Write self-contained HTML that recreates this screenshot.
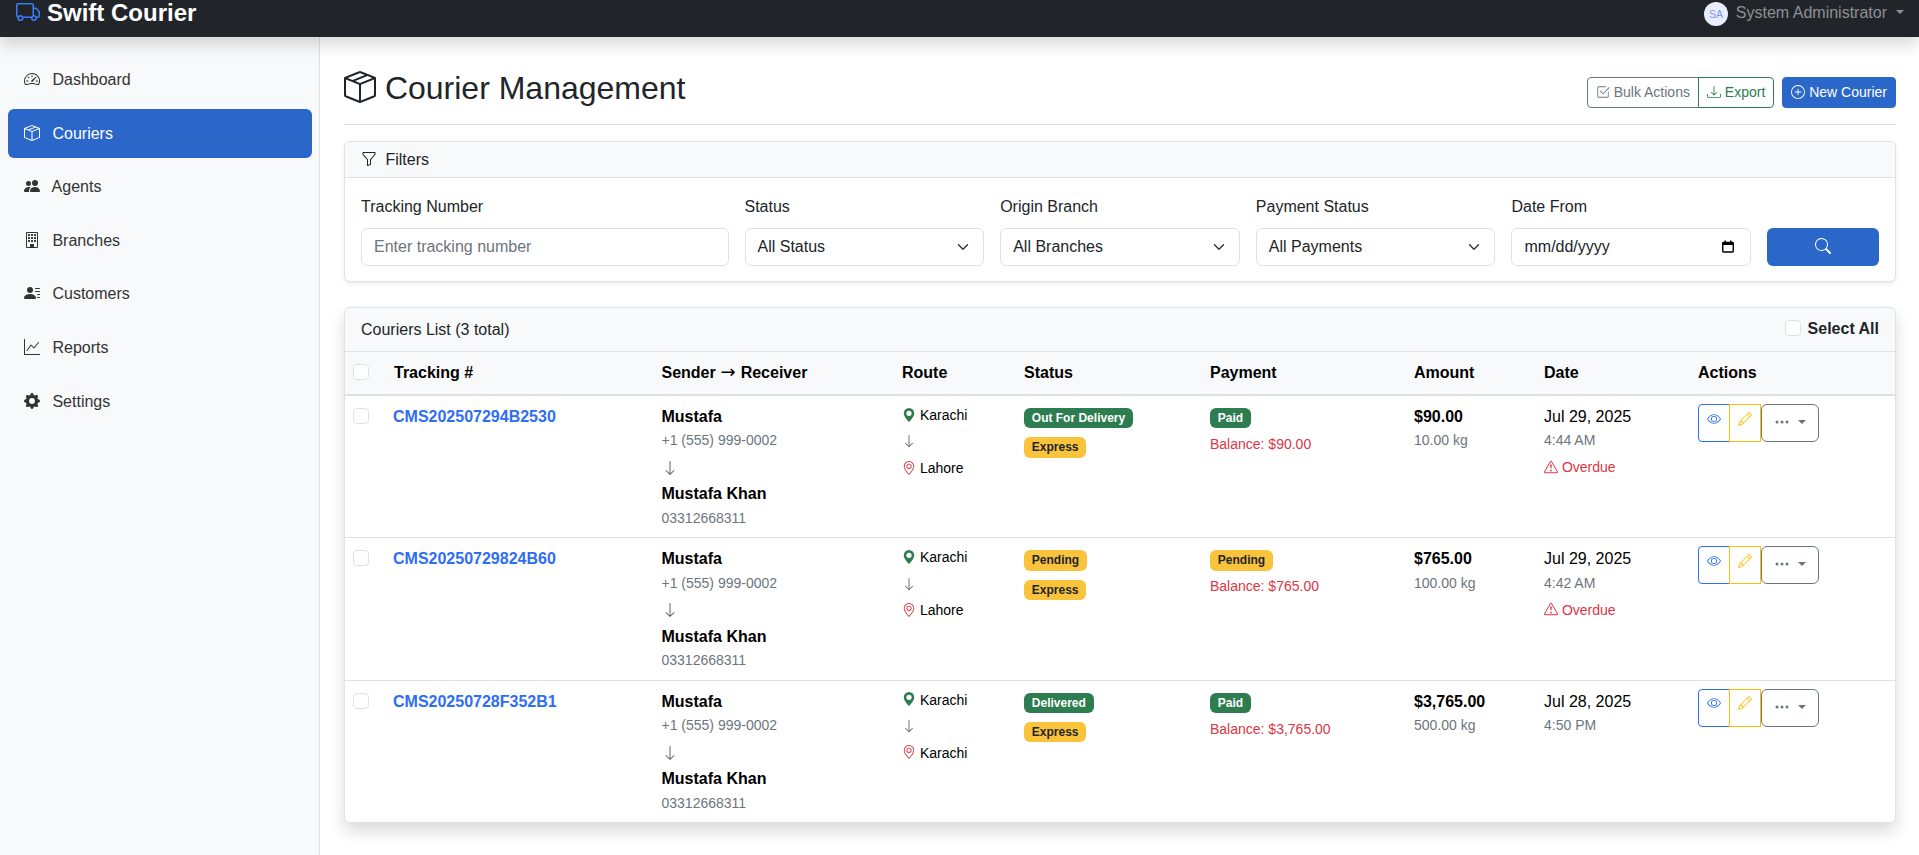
<!DOCTYPE html>
<html lang="en"><head><meta charset="utf-8"><title>Courier Management - Swift Courier</title>
<style>
*{box-sizing:border-box}
html,body{margin:0;padding:0}
body{width:1919px;height:855px;overflow:hidden;position:relative;background:#fff;font-family:"Liberation Sans",sans-serif;font-size:16px;line-height:1.5;color:#212529}
a{text-decoration:none;color:inherit}
.bi{display:inline-block;width:1em;height:1em;vertical-align:-.125em;fill:currentColor}
.me2{margin-right:8px}
.navbar{position:absolute;left:0;top:0;width:1919px;height:37px;background:#212529;z-index:10;box-shadow:0 8px 16px rgba(0,0,0,.15)}
.brand{position:absolute;left:16px;top:-4.6px;font-size:24px;font-weight:700;color:#fff;line-height:36px;white-space:nowrap}
.brand .trk-ic{color:#3b7cff;margin-right:7px;vertical-align:-3px}
.user{position:absolute;right:15px;top:0;height:28px;display:flex;align-items:center;color:#8f9193}
.avatar{position:absolute;right:176px;top:2px;width:24px;height:24px;border-radius:50%;background:#e9eefe;color:#7f93f3;font-size:10.5px;line-height:25px;text-align:center}
.uname{position:absolute;right:17px;top:1.4px;line-height:24px;white-space:nowrap}
.ucaret{position:absolute;right:0;top:10px;border-top:4.8px solid #8f9193;border-left:4.8px solid transparent;border-right:4.8px solid transparent}
.sidebar{position:absolute;left:0;top:37px;width:320px;height:818px;background:#f8f9fa;border-right:1px solid #dfe0e2}
.sidebar ul{list-style:none;margin:0;padding:18.3px 0 0 0}
.sidebar li{margin:0 0 4px 0}
.nl{display:block;margin:0 7.5px 0 8px;padding:12.8px 16px;border-radius:6px;color:#333;height:49.6px;white-space:nowrap}
.nl.active{background:#2b66c9;color:#fff}
main{position:absolute;left:320px;top:37px;width:1599px;padding:0 23px 0 24px;height:818px}
.ph{margin-top:16.2px;padding:16px 0 8px;border-bottom:1px solid #dee2e6;display:flex;justify-content:space-between;align-items:center;margin-bottom:16px}
h1{font-size:32px;font-weight:500;line-height:1.2;margin:0 0 8px 0}
.tb{display:flex}
.grp{display:flex;margin-right:8px}
.btn{display:inline-block;font-size:14px;line-height:21px;padding:4px 8px;border:1px solid;border-radius:4px;white-space:nowrap}
.bos{color:#6c757d;border-color:#6c757d}
.bosu{color:#2e7d50;border-color:#2e7d50;margin-left:-1px}
.b-first{border-top-right-radius:0;border-bottom-right-radius:0}
.b-last{border-top-left-radius:0;border-bottom-left-radius:0}
.bp{background:#2b66c9;border-color:#2b66c9;color:#fff}
.card{border:1px solid #dfe2e6;border-radius:6px;background:#fff}
.fcard{box-shadow:0 2px 4px rgba(0,0,0,.075);margin-bottom:0;position:absolute;left:24px;top:104px;width:1552px}
.lcard{box-shadow:0 8px 16px rgba(0,0,0,.15);position:absolute;left:24px;top:270px;width:1552px}
.ch{background:#f8f9fa;border-bottom:1px solid #dfe2e6;padding:8px 16px;border-radius:5px 5px 0 0}
h6{font-size:16px;font-weight:500;line-height:1.2;margin:0}
.cbody{padding:17px 16px 15px;display:flex}
.fc{margin-right:16px;flex:none}
.fc label{display:block;margin-bottom:8.8px;line-height:24px}
.inp{height:38px;border:1px solid #dee2e6;border-radius:6px;padding:6px 12px;line-height:24px;position:relative;white-space:nowrap;background:#fff}
.ph-t{color:#6c757d}
.chev{position:absolute;right:12px;top:12px;width:16px;height:12px}
.cal{position:absolute;right:15px;top:10px;width:14px;height:15px}
.sbtn{display:block;height:38px;border-radius:6px;background:#2b66c9;color:#fff;text-align:center;line-height:38px}
.ch2{display:flex;justify-content:space-between;align-items:center;height:44px;padding:8px 16px}
.selall{display:flex;align-items:center;font-weight:700;margin-top:-2px}
.selall label{margin-left:7px}
.cb{display:inline-block;width:16px;height:16px;border:1px solid #dee2e6;border-radius:4px;background:#fff;vertical-align:top;margin-top:4px}
.selall .cb{margin-top:-2px;margin-left:0}
table{color:#000;border-collapse:separate;border-spacing:0;width:1550px;table-layout:fixed}
th,td{padding:8px;text-align:left;vertical-align:top;font-weight:400}
th{font-weight:700;background:#f8f9fa;height:44px;padding-top:9px;padding-bottom:7px;border-bottom:2px solid #dee2e6;line-height:24px}
td{height:142.3px;border-bottom:1px solid #dee2e6}
.c0{width:41px}
.trk{font-size:16px;font-weight:700;color:#2e6df6;margin-left:-1px}
.l24{height:24px;line-height:24px;white-space:nowrap}
small,.r21,.bal,.od{font-size:14px}
.mut{color:#6c757d}
.suc{color:#2e7d50}
.dan{color:#dc3545}
.arr{height:29.3px;padding-top:7px;line-height:1}
.arr .bi{display:block}
.r21{height:21px;line-height:21px;white-space:nowrap}
.rarr{height:32px;padding-top:8.3px;line-height:1;font-size:14px}
.rarr .bi{display:block}
.badge{display:inline-block;font-size:12px;font-weight:700;line-height:1;padding:4.2px 7.8px;border-radius:6px;color:#fff;white-space:nowrap;vertical-align:top}
.bg-success{background:#2e7d50}
.bg-warning{background:#f9c33b;color:#212529}
.bl{height:24px;padding-top:4px;line-height:1}
.bl2{height:24px;padding-top:9.3px;line-height:1}
.bal{color:#dc3545;margin-top:4px;line-height:24px;height:24px;white-space:nowrap}
.od{color:#dc3545;line-height:24px;height:24px;margin-top:3px;white-space:nowrap}
.bg{display:flex;height:38px}
.ab{display:block;width:32px;border:1px solid;padding:4px 8px;font-size:14px;line-height:21px;margin-right:-1px}
.ab1{color:#2e6df6;border-radius:4px 0 0 4px;width:32.3px}
.ab2{color:#ffc107}
.ab3{display:block;width:57.8px;border:1px solid #6c757d;color:#6c757d;border-radius:6px;padding:6px 0 0 12px;line-height:24px;position:relative;margin-left:1px}
.caret{position:absolute;left:36px;top:15px;border-top:4.8px solid #6c757d;border-left:4.8px solid transparent;border-right:4.8px solid transparent}
.me1{margin-right:4px}
th.c0{padding-top:8px}
td.c1,td.c2,td.c3,td.c6,td.c7{padding-top:9px;padding-bottom:7px}
.l24.s2{margin-top:-0.7px;margin-bottom:0.7px}
.od{margin-top:3px}
tbody tr:last-child td{border-bottom:0;height:141.3px}
.arw{display:inline-block;width:16px;text-align:center;font-family:"DejaVu Sans","Liberation Sans",sans-serif;font-weight:400;font-size:18px;line-height:16px;position:relative;top:-0.5px;text-indent:-0.5px}
.l24.s3{margin-top:-0.3px}
.arr.mut,.rarr.mut{color:#5c636a}

</style></head><body>
<nav class="navbar">
  <a class="brand"><svg class="bi trk-ic" viewBox="0 0 16 16" fill="currentColor"><path d="M0 3.5A1.5 1.5 0 0 1 1.5 2h9A1.5 1.5 0 0 1 12 3.5V5h1.02a1.5 1.5 0 0 1 1.17.563l1.481 1.85a1.5 1.5 0 0 1 .329.938V10.5a1.5 1.5 0 0 1-1.5 1.5H14a2 2 0 1 1-4 0H5a2 2 0 1 1-3.998-.085A1.5 1.5 0 0 1 0 10.5zm1.294 7.456A2 2 0 0 1 4.732 11h5.536a2 2 0 0 1 .732-.732V3.5a.5.5 0 0 0-.5-.5h-9a.5.5 0 0 0-.5.5v7a.5.5 0 0 0 .294.456M12 10a2 2 0 0 1 1.732 1h.768a.5.5 0 0 0 .5-.5V8.35a.5.5 0 0 0-.11-.312l-1.48-1.85A.5.5 0 0 0 13.02 6H12zm-9 1a1 1 0 1 0 0 2 1 1 0 0 0 0-2m9 0a1 1 0 1 0 0 2 1 1 0 0 0 0-2"/></svg><span>Swift Courier</span></a>
  <div class="user"><span class="avatar">SA</span><span class="uname">System Administrator</span><span class="ucaret"></span></div>
</nav>
<aside class="sidebar"><ul><li><a class="nl"><svg class="bi me2" viewBox="0 0 16 16" fill="currentColor"><path d="M8 4a.5.5 0 0 1 .5.5V6a.5.5 0 0 1-1 0V4.5A.5.5 0 0 1 8 4M3.732 5.732a.5.5 0 0 1 .707 0l.915.914a.5.5 0 1 1-.708.708l-.914-.915a.5.5 0 0 1 0-.707M2 10a.5.5 0 0 1 .5-.5h1.586a.5.5 0 0 1 0 1H2.5A.5.5 0 0 1 2 10m9.5 0a.5.5 0 0 1 .5-.5h1.5a.5.5 0 0 1 0 1H12a.5.5 0 0 1-.5-.5m.754-4.246a.39.39 0 0 0-.527-.02L7.547 9.31a.91.91 0 1 0 1.302 1.258l3.434-4.297a.39.39 0 0 0-.029-.518z"/><path fill-rule="evenodd" d="M0 10a8 8 0 1 1 15.547 2.661c-.442 1.253-1.845 1.602-2.932 1.25C11.309 13.488 9.475 13 8 13c-1.474 0-3.31.488-4.615.911-1.087.352-2.49.003-2.932-1.25A8 8 0 0 1 0 10m8-7a7 7 0 0 0-6.603 9.329c.203.575.923.876 1.68.63C4.397 12.533 6.358 12 8 12s3.604.532 4.923.96c.757.245 1.477-.056 1.68-.631A7 7 0 0 0 8 3"/></svg> Dashboard</a></li><li><a class="nl active"><svg class="bi me2" viewBox="0 0 16 16" fill="currentColor"><path d="M8.186 1.113a.5.5 0 0 0-.372 0L1.846 3.5l2.404.961L10.404 2zm3.564 1.426L5.596 5 8 5.961 14.154 3.5zm3.25 1.7-6.5 2.6v7.922l6.5-2.6V4.24zM7.5 14.762V6.838L1 4.239v7.923zM7.443.184a1.5 1.5 0 0 1 1.114 0l7.129 2.852A.5.5 0 0 1 16 3.5v8.662a1 1 0 0 1-.629.928l-7.185 2.874a.5.5 0 0 1-.372 0L.63 13.09a1 1 0 0 1-.63-.928V3.5a.5.5 0 0 1 .314-.464z"/></svg> Couriers</a></li><li><a class="nl"><svg class="bi me2" viewBox="0 0 16 16" fill="currentColor"><path d="M7 14s-1 0-1-1 1-4 5-4 5 3 5 4-1 1-1 1zm4-6a3 3 0 1 0 0-6 3 3 0 0 0 0 6m-5.784 6A2.24 2.24 0 0 1 5 13c0-1.355.68-2.75 1.936-3.72A6.3 6.3 0 0 0 5 9c-4 0-5 3-5 4s1 1 1 1zM4.5 8a2.5 2.5 0 1 0 0-5 2.5 2.5 0 0 0 0 5"/></svg> Agents</a></li><li><a class="nl"><svg class="bi me2" viewBox="0 0 16 16" fill="currentColor"><path d="M4 2.5a.5.5 0 0 1 .5-.5h1a.5.5 0 0 1 .5.5v1a.5.5 0 0 1-.5.5h-1a.5.5 0 0 1-.5-.5zm3 0a.5.5 0 0 1 .5-.5h1a.5.5 0 0 1 .5.5v1a.5.5 0 0 1-.5.5h-1a.5.5 0 0 1-.5-.5zm3.5-.5a.5.5 0 0 0-.5.5v1a.5.5 0 0 0 .5.5h1a.5.5 0 0 0 .5-.5v-1a.5.5 0 0 0-.5-.5zM4 5.5a.5.5 0 0 1 .5-.5h1a.5.5 0 0 1 .5.5v1a.5.5 0 0 1-.5.5h-1a.5.5 0 0 1-.5-.5zM7.5 5a.5.5 0 0 0-.5.5v1a.5.5 0 0 0 .5.5h1a.5.5 0 0 0 .5-.5v-1a.5.5 0 0 0-.5-.5zm2.5.5a.5.5 0 0 1 .5-.5h1a.5.5 0 0 1 .5.5v1a.5.5 0 0 1-.5.5h-1a.5.5 0 0 1-.5-.5zM4.5 8a.5.5 0 0 0-.5.5v1a.5.5 0 0 0 .5.5h1a.5.5 0 0 0 .5-.5v-1a.5.5 0 0 0-.5-.5zm2.5.5a.5.5 0 0 1 .5-.5h1a.5.5 0 0 1 .5.5v1a.5.5 0 0 1-.5.5h-1a.5.5 0 0 1-.5-.5zm3.5-.5a.5.5 0 0 0-.5.5v1a.5.5 0 0 0 .5.5h1a.5.5 0 0 0 .5-.5v-1a.5.5 0 0 0-.5-.5z"/><path d="M2 1a1 1 0 0 1 1-1h10a1 1 0 0 1 1 1v14a1 1 0 0 1-1 1H3a1 1 0 0 1-1-1zm11 0H3v14h3v-2.5a.5.5 0 0 1 .5-.5h3a.5.5 0 0 1 .5.5V15h3z"/></svg> Branches</a></li><li><a class="nl"><svg class="bi me2" viewBox="0 0 16 16" fill="currentColor"><path d="M6 8a3 3 0 1 0 0-6 3 3 0 0 0 0 6m-5 6s-1 0-1-1 1-4 6-4 6 3 6 4-1 1-1 1zM11 3.5a.5.5 0 0 1 .5-.5h4a.5.5 0 0 1 0 1h-4a.5.5 0 0 1-.5-.5m.5 2.5a.5.5 0 0 0 0 1h4a.5.5 0 0 0 0-1zm2 3a.5.5 0 0 0 0 1h2a.5.5 0 0 0 0-1zm0 3a.5.5 0 0 0 0 1h2a.5.5 0 0 0 0-1z"/></svg> Customers</a></li><li><a class="nl"><svg class="bi me2" viewBox="0 0 16 16" fill="currentColor"><path fill-rule="evenodd" d="M0 0h1v15h15v1H0zm14.817 3.113a.5.5 0 0 1 .07.704l-4.5 5.5a.5.5 0 0 1-.74.037L7.06 6.767l-3.656 5.027a.5.5 0 0 1-.808-.588l4-5.5a.5.5 0 0 1 .758-.06l2.609 2.61 4.15-5.073a.5.5 0 0 1 .704-.07"/></svg> Reports</a></li><li><a class="nl"><svg class="bi me2" viewBox="0 0 16 16" fill="currentColor"><path d="M9.405 1.05c-.413-1.4-2.397-1.4-2.81 0l-.1.34a1.464 1.464 0 0 1-2.105.872l-.31-.17c-1.283-.698-2.686.705-1.987 1.987l.169.311c.446.82.023 1.841-.872 2.105l-.34.1c-1.4.413-1.4 2.397 0 2.81l.34.1a1.464 1.464 0 0 1 .872 2.105l-.17.31c-.698 1.283.705 2.686 1.987 1.987l.311-.169a1.464 1.464 0 0 1 2.105.872l.1.34c.413 1.4 2.397 1.4 2.81 0l.1-.34a1.464 1.464 0 0 1 2.105-.872l.31.17c1.283.698 2.686-.705 1.987-1.987l-.169-.311a1.464 1.464 0 0 1 .872-2.105l.34-.1c1.4-.413 1.4-2.397 0-2.81l-.34-.1a1.464 1.464 0 0 1-.872-2.105l.17-.31c.698-1.283-.705-2.686-1.987-1.987l-.311.169a1.464 1.464 0 0 1-2.105-.872zM8 10.93a2.929 2.929 0 1 1 0-5.86 2.929 2.929 0 0 1 0 5.858z"/></svg> Settings</a></li></ul></aside>
<main>
  <div class="ph">
    <h1><svg class="bi h1ic" viewBox="0 0 16 16" fill="currentColor"><path d="M8.186 1.113a.5.5 0 0 0-.372 0L1.846 3.5l2.404.961L10.404 2zm3.564 1.426L5.596 5 8 5.961 14.154 3.5zm3.25 1.7-6.5 2.6v7.922l6.5-2.6V4.24zM7.5 14.762V6.838L1 4.239v7.923zM7.443.184a1.5 1.5 0 0 1 1.114 0l7.129 2.852A.5.5 0 0 1 16 3.5v8.662a1 1 0 0 1-.629.928l-7.185 2.874a.5.5 0 0 1-.372 0L.63 13.09a1 1 0 0 1-.63-.928V3.5a.5.5 0 0 1 .314-.464z"/></svg> Courier Management</h1>
    <div class="tb">
      <div class="grp"><a class="btn bos b-first"><svg class="bi" viewBox="0 0 16 16" fill="currentColor"><path d="M3 14.5A1.5 1.5 0 0 1 1.5 13V3A1.5 1.5 0 0 1 3 1.5h8a.5.5 0 0 1 0 1H3a.5.5 0 0 0-.5.5v10a.5.5 0 0 0 .5.5h10a.5.5 0 0 0 .5-.5V8a.5.5 0 0 1 1 0v5a1.5 1.5 0 0 1-1.5 1.5z"/><path d="m8.354 10.354 7-7a.5.5 0 0 0-.708-.708L8 9.293 5.354 6.646a.5.5 0 1 0-.708.708l3 3a.5.5 0 0 0 .708 0"/></svg> Bulk Actions</a><a class="btn bosu b-last"><svg class="bi" viewBox="0 0 16 16" fill="currentColor"><path d="M.5 9.9a.5.5 0 0 1 .5.5v2.5a1 1 0 0 0 1 1h12a1 1 0 0 0 1-1v-2.5a.5.5 0 0 1 1 0v2.5a2 2 0 0 1-2 2H2a2 2 0 0 1-2-2v-2.5a.5.5 0 0 1 .5-.5"/><path d="M7.646 11.854a.5.5 0 0 0 .708 0l3-3a.5.5 0 0 0-.708-.708L8.5 10.293V1.5a.5.5 0 0 0-1 0v8.793L5.354 8.146a.5.5 0 1 0-.708.708z"/></svg> Export</a></div>
      <a class="btn bp"><svg class="bi" viewBox="0 0 16 16" fill="currentColor"><path d="M8 15A7 7 0 1 1 8 1a7 7 0 0 1 0 14m0 1A8 8 0 1 0 8 0a8 8 0 0 0 0 16"/><path d="M8 4a.5.5 0 0 1 .5.5v3h3a.5.5 0 0 1 0 1h-3v3a.5.5 0 0 1-1 0v-3h-3a.5.5 0 0 1 0-1h3v-3A.5.5 0 0 1 8 4"/></svg> New Courier</a>
    </div>
  </div>
  <div class="card fcard">
    <div class="ch"><h6><svg class="bi me1" viewBox="0 0 16 16" fill="currentColor"><path d="M1.5 1.5A.5.5 0 0 1 2 1h12a.5.5 0 0 1 .5.5v2a.5.5 0 0 1-.128.334L10 8.692V13.5a.5.5 0 0 1-.342.474l-3 1A.5.5 0 0 1 6 14.5V8.692L1.628 3.834A.5.5 0 0 1 1.5 3.5zm1 .5v1.308l4.372 4.858A.5.5 0 0 1 7 8.5v5.306l2-.666V8.5a.5.5 0 0 1 .128-.334L13.5 3.308V2z"/></svg> Filters</h6></div>
    <div class="cbody">
      <div class="fc" style="width:367.5px"><label>Tracking Number</label><div class="inp ph-t">Enter tracking number</div></div>
      <div class="fc" style="width:239.67px"><label>Status</label><div class="inp sel">All Status<svg class="chev" viewBox="0 0 16 16"><path fill="none" stroke="#343a40" stroke-linecap="round" stroke-linejoin="round" stroke-width="2" d="m2 5 6 6 6-6"/></svg></div></div>
      <div class="fc" style="width:239.67px"><label>Origin Branch</label><div class="inp sel">All Branches<svg class="chev" viewBox="0 0 16 16"><path fill="none" stroke="#343a40" stroke-linecap="round" stroke-linejoin="round" stroke-width="2" d="m2 5 6 6 6-6"/></svg></div></div>
      <div class="fc" style="width:239.67px"><label>Payment Status</label><div class="inp sel">All Payments<svg class="chev" viewBox="0 0 16 16"><path fill="none" stroke="#343a40" stroke-linecap="round" stroke-linejoin="round" stroke-width="2" d="m2 5 6 6 6-6"/></svg></div></div>
      <div class="fc" style="width:239.67px"><label>Date From</label><div class="inp sel">mm/dd/yyyy<svg class="cal" viewBox="0 0 16 16"><path fill="#000" d="M4 1h1.6v1.6h4.8V1H12v1.6h1.2c.9 0 1.6.7 1.6 1.6v9.200c0 .9-.7 1.600-1.600 1.600H2.800c-.9 0-1.600-.7-1.600-1.600V4.200c0-.9.7-1.600 1.600-1.600H4zM2.800 6.200v7.200h10.400V6.200z"/></svg></div></div>
      <div class="fc" style="width:111.83px;margin-right:0"><label>&nbsp;</label><a class="sbtn"><svg class="bi" viewBox="0 0 16 16" fill="currentColor"><path d="M11.742 10.344a6.5 6.5 0 1 0-1.397 1.398h-.001q.044.06.098.115l3.85 3.85a1 1 0 0 0 1.415-1.414l-3.85-3.85a1 1 0 0 0-.115-.1zM12 6.5a5.5 5.5 0 1 1-11 0 5.5 5.5 0 0 1 11 0"/></svg></a></div>
    </div>
  </div>
  <div class="card lcard">
    <div class="ch ch2"><h6>Couriers List (3 total)</h6><div class="selall"><span class="cb"></span><label>Select All</label></div></div>
    <table>
      <colgroup><col style="width:41px"><col style="width:267.5px"><col style="width:240.5px"><col style="width:122px"><col style="width:186px"><col style="width:204px"><col style="width:130px"><col style="width:154px"><col style="width:205px"></colgroup>
      <thead><tr><th class="c0"><span class="cb"></span></th><th>Tracking #</th><th>Sender <span class="arw">→</span> Receiver</th><th>Route</th><th>Status</th><th>Payment</th><th>Amount</th><th>Date</th><th>Actions</th></tr></thead>
      <tbody>
<tr>
<td class="c0"><span class="cb"></span></td>
<td class="c1"><a class="trk">CMS202507294B2530</a></td>
<td class="c2"><div class="l24"><strong>Mustafa</strong></div><div class="l24 s2"><small class="mut">+1 (555) 999-0002</small></div><div class="arr mut"><svg class="bi" viewBox="0 0 16 16" fill="currentColor"><path fill-rule="evenodd" d="M8 1a.5.5 0 0 1 .5.5v11.793l3.146-3.147a.5.5 0 0 1 .708.708l-4 4a.5.5 0 0 1-.708 0l-4-4a.5.5 0 0 1 .708-.708L7.5 13.293V1.5A.5.5 0 0 1 8 1"/></svg></div><div class="l24"><strong>Mustafa Khan</strong></div><div class="l24 s3"><small class="mut">03312668311</small></div></td>
<td class="c3"><div class="r21"><svg class="bi suc" viewBox="0 0 16 16" fill="currentColor"><path d="M8 16s6-5.686 6-10A6 6 0 0 0 2 6c0 4.314 6 10 6 10m0-7a3 3 0 1 1 0-6 3 3 0 0 1 0 6"/></svg> Karachi</div><div class="rarr mut"><svg class="bi" viewBox="0 0 16 16" fill="currentColor"><path fill-rule="evenodd" d="M8 1a.5.5 0 0 1 .5.5v11.793l3.146-3.147a.5.5 0 0 1 .708.708l-4 4a.5.5 0 0 1-.708 0l-4-4a.5.5 0 0 1 .708-.708L7.5 13.293V1.5A.5.5 0 0 1 8 1"/></svg></div><div class="r21"><svg class="bi dan" viewBox="0 0 16 16" fill="currentColor"><path d="M12.166 8.94c-.524 1.062-1.234 2.12-1.96 3.07A32 32 0 0 1 8 14.58a32 32 0 0 1-2.206-2.57c-.726-.95-1.436-2.008-1.96-3.07C3.304 7.867 3 6.862 3 6a5 5 0 0 1 10 0c0 .862-.305 1.867-.834 2.94M8 16s6-5.686 6-10A6 6 0 0 0 2 6c0 4.314 6 10 6 10"/><path d="M8 8a2 2 0 1 1 0-4 2 2 0 0 1 0 4m0 1a3 3 0 1 0 0-6 3 3 0 0 0 0 6"/></svg> Lahore</div></td>
<td class="c4"><div class="bl"><span class="badge bg-success">Out For Delivery</span></div><div class="bl2"><span class="badge bg-warning">Express</span></div></td>
<td class="c5"><div class="bl"><span class="badge bg-success">Paid</span></div><div class="bal">Balance: $90.00</div></td>
<td class="c6"><div class="l24"><strong>$90.00</strong></div><div class="l24 s2"><small class="mut">10.00 kg</small></div></td>
<td class="c7"><div class="l24">Jul 29, 2025</div><div class="l24 s2"><small class="mut">4:44 AM</small></div><div class="od"><svg class="bi" viewBox="0 0 16 16" fill="currentColor"><path d="M7.938 2.016A.13.13 0 0 1 8.002 2a.13.13 0 0 1 .063.016.15.15 0 0 1 .054.057l6.857 11.667c.036.060.035.124.002.183a.2.2 0 0 1-.054.060.1.1 0 0 1-.066.017H1.146a.1.1 0 0 1-.066-.017.2.2 0 0 1-.054-.060.18.18 0 0 1 .002-.183L7.884 2.073a.15.15 0 0 1 .054-.057m1.044-.450a1.130 1.130 0 0 0-1.960 0L.165 13.233c-.457.778.091 1.767.980 1.767h13.713c.889 0 1.438-.990.980-1.767z"/><path d="M7.002 12a1 1 0 1 1 2 0 1 1 0 0 1-2 0M7.100 5.995a.905.905 0 1 1 1.800 0l-.350 3.507a.552.552 0 0 1-1.100 0z"/></svg> Overdue</div></td>
<td class="c8"><div class="bg"><a class="ab ab1"><svg class="bi" viewBox="0 0 16 16" fill="currentColor"><path d="M16 8s-3-5.5-8-5.5S0 8 0 8s3 5.500 8 5.500S16 8 16 8M1.173 8a13 13 0 0 1 1.660-2.043C4.120 4.668 5.880 3.500 8 3.500s3.879 1.168 5.168 2.457A13 13 0 0 1 14.828 8q-.086.130-.195.288c-.335.480-.830 1.120-1.465 1.755C11.879 11.332 10.119 12.500 8 12.500s-3.879-1.168-5.168-2.457A13 13 0 0 1 1.172 8z"/><path d="M8 5.500a2.500 2.500 0 1 0 0 5 2.500 2.500 0 0 0 0-5M4.500 8a3.500 3.500 0 1 1 7 0 3.500 3.500 0 0 1-7 0"/></svg></a><a class="ab ab2"><svg class="bi" viewBox="0 0 16 16" fill="currentColor"><path d="M12.146.146a.5.5 0 0 1 .708 0l3 3a.5.5 0 0 1 0 .708l-10 10a.5.5 0 0 1-.168.110l-5 2a.5.5 0 0 1-.650-.650l2-5a.5.5 0 0 1 .110-.168zM11.207 2.500 13.500 4.793 14.793 3.500 12.500 1.207zm1.586 3L10.500 3.207 4 9.707V10h.500a.5.5 0 0 1 .5.5v.500h.500a.5.5 0 0 1 .5.5v.500h.293zm-9.761 5.175-.106.106-1.528 3.821 3.821-1.528.106-.106A.5.5 0 0 1 5 12.500V12h-.500a.5.5 0 0 1-.5-.5V11h-.500a.5.5 0 0 1-.468-.325"/></svg></a><a class="ab3"><svg class="bi" viewBox="0 0 16 16" fill="currentColor"><path d="M3 9.500a1.500 1.500 0 1 1 0-3 1.500 1.500 0 0 1 0 3m5 0a1.500 1.500 0 1 1 0-3 1.500 1.500 0 0 1 0 3m5 0a1.500 1.500 0 1 1 0-3 1.500 1.500 0 0 1 0 3"/></svg><span class="caret"></span></a></div></td>
</tr>
<tr>
<td class="c0"><span class="cb"></span></td>
<td class="c1"><a class="trk">CMS20250729824B60</a></td>
<td class="c2"><div class="l24"><strong>Mustafa</strong></div><div class="l24 s2"><small class="mut">+1 (555) 999-0002</small></div><div class="arr mut"><svg class="bi" viewBox="0 0 16 16" fill="currentColor"><path fill-rule="evenodd" d="M8 1a.5.5 0 0 1 .5.5v11.793l3.146-3.147a.5.5 0 0 1 .708.708l-4 4a.5.5 0 0 1-.708 0l-4-4a.5.5 0 0 1 .708-.708L7.5 13.293V1.5A.5.5 0 0 1 8 1"/></svg></div><div class="l24"><strong>Mustafa Khan</strong></div><div class="l24 s3"><small class="mut">03312668311</small></div></td>
<td class="c3"><div class="r21"><svg class="bi suc" viewBox="0 0 16 16" fill="currentColor"><path d="M8 16s6-5.686 6-10A6 6 0 0 0 2 6c0 4.314 6 10 6 10m0-7a3 3 0 1 1 0-6 3 3 0 0 1 0 6"/></svg> Karachi</div><div class="rarr mut"><svg class="bi" viewBox="0 0 16 16" fill="currentColor"><path fill-rule="evenodd" d="M8 1a.5.5 0 0 1 .5.5v11.793l3.146-3.147a.5.5 0 0 1 .708.708l-4 4a.5.5 0 0 1-.708 0l-4-4a.5.5 0 0 1 .708-.708L7.5 13.293V1.5A.5.5 0 0 1 8 1"/></svg></div><div class="r21"><svg class="bi dan" viewBox="0 0 16 16" fill="currentColor"><path d="M12.166 8.94c-.524 1.062-1.234 2.12-1.96 3.07A32 32 0 0 1 8 14.58a32 32 0 0 1-2.206-2.57c-.726-.95-1.436-2.008-1.96-3.07C3.304 7.867 3 6.862 3 6a5 5 0 0 1 10 0c0 .862-.305 1.867-.834 2.94M8 16s6-5.686 6-10A6 6 0 0 0 2 6c0 4.314 6 10 6 10"/><path d="M8 8a2 2 0 1 1 0-4 2 2 0 0 1 0 4m0 1a3 3 0 1 0 0-6 3 3 0 0 0 0 6"/></svg> Lahore</div></td>
<td class="c4"><div class="bl"><span class="badge bg-warning">Pending</span></div><div class="bl2"><span class="badge bg-warning">Express</span></div></td>
<td class="c5"><div class="bl"><span class="badge bg-warning">Pending</span></div><div class="bal">Balance: $765.00</div></td>
<td class="c6"><div class="l24"><strong>$765.00</strong></div><div class="l24 s2"><small class="mut">100.00 kg</small></div></td>
<td class="c7"><div class="l24">Jul 29, 2025</div><div class="l24 s2"><small class="mut">4:42 AM</small></div><div class="od"><svg class="bi" viewBox="0 0 16 16" fill="currentColor"><path d="M7.938 2.016A.13.13 0 0 1 8.002 2a.13.13 0 0 1 .063.016.15.15 0 0 1 .054.057l6.857 11.667c.036.060.035.124.002.183a.2.2 0 0 1-.054.060.1.1 0 0 1-.066.017H1.146a.1.1 0 0 1-.066-.017.2.2 0 0 1-.054-.060.18.18 0 0 1 .002-.183L7.884 2.073a.15.15 0 0 1 .054-.057m1.044-.450a1.130 1.130 0 0 0-1.960 0L.165 13.233c-.457.778.091 1.767.980 1.767h13.713c.889 0 1.438-.990.980-1.767z"/><path d="M7.002 12a1 1 0 1 1 2 0 1 1 0 0 1-2 0M7.100 5.995a.905.905 0 1 1 1.800 0l-.350 3.507a.552.552 0 0 1-1.100 0z"/></svg> Overdue</div></td>
<td class="c8"><div class="bg"><a class="ab ab1"><svg class="bi" viewBox="0 0 16 16" fill="currentColor"><path d="M16 8s-3-5.5-8-5.5S0 8 0 8s3 5.500 8 5.500S16 8 16 8M1.173 8a13 13 0 0 1 1.660-2.043C4.120 4.668 5.880 3.500 8 3.500s3.879 1.168 5.168 2.457A13 13 0 0 1 14.828 8q-.086.130-.195.288c-.335.480-.830 1.120-1.465 1.755C11.879 11.332 10.119 12.500 8 12.500s-3.879-1.168-5.168-2.457A13 13 0 0 1 1.172 8z"/><path d="M8 5.500a2.500 2.500 0 1 0 0 5 2.500 2.500 0 0 0 0-5M4.500 8a3.500 3.500 0 1 1 7 0 3.500 3.500 0 0 1-7 0"/></svg></a><a class="ab ab2"><svg class="bi" viewBox="0 0 16 16" fill="currentColor"><path d="M12.146.146a.5.5 0 0 1 .708 0l3 3a.5.5 0 0 1 0 .708l-10 10a.5.5 0 0 1-.168.110l-5 2a.5.5 0 0 1-.650-.650l2-5a.5.5 0 0 1 .110-.168zM11.207 2.500 13.500 4.793 14.793 3.500 12.500 1.207zm1.586 3L10.500 3.207 4 9.707V10h.500a.5.5 0 0 1 .5.5v.500h.500a.5.5 0 0 1 .5.5v.500h.293zm-9.761 5.175-.106.106-1.528 3.821 3.821-1.528.106-.106A.5.5 0 0 1 5 12.500V12h-.500a.5.5 0 0 1-.5-.5V11h-.500a.5.5 0 0 1-.468-.325"/></svg></a><a class="ab3"><svg class="bi" viewBox="0 0 16 16" fill="currentColor"><path d="M3 9.500a1.500 1.500 0 1 1 0-3 1.500 1.500 0 0 1 0 3m5 0a1.500 1.500 0 1 1 0-3 1.500 1.500 0 0 1 0 3m5 0a1.500 1.500 0 1 1 0-3 1.500 1.500 0 0 1 0 3"/></svg><span class="caret"></span></a></div></td>
</tr>
<tr>
<td class="c0"><span class="cb"></span></td>
<td class="c1"><a class="trk">CMS20250728F352B1</a></td>
<td class="c2"><div class="l24"><strong>Mustafa</strong></div><div class="l24 s2"><small class="mut">+1 (555) 999-0002</small></div><div class="arr mut"><svg class="bi" viewBox="0 0 16 16" fill="currentColor"><path fill-rule="evenodd" d="M8 1a.5.5 0 0 1 .5.5v11.793l3.146-3.147a.5.5 0 0 1 .708.708l-4 4a.5.5 0 0 1-.708 0l-4-4a.5.5 0 0 1 .708-.708L7.5 13.293V1.5A.5.5 0 0 1 8 1"/></svg></div><div class="l24"><strong>Mustafa Khan</strong></div><div class="l24 s3"><small class="mut">03312668311</small></div></td>
<td class="c3"><div class="r21"><svg class="bi suc" viewBox="0 0 16 16" fill="currentColor"><path d="M8 16s6-5.686 6-10A6 6 0 0 0 2 6c0 4.314 6 10 6 10m0-7a3 3 0 1 1 0-6 3 3 0 0 1 0 6"/></svg> Karachi</div><div class="rarr mut"><svg class="bi" viewBox="0 0 16 16" fill="currentColor"><path fill-rule="evenodd" d="M8 1a.5.5 0 0 1 .5.5v11.793l3.146-3.147a.5.5 0 0 1 .708.708l-4 4a.5.5 0 0 1-.708 0l-4-4a.5.5 0 0 1 .708-.708L7.5 13.293V1.5A.5.5 0 0 1 8 1"/></svg></div><div class="r21"><svg class="bi dan" viewBox="0 0 16 16" fill="currentColor"><path d="M12.166 8.94c-.524 1.062-1.234 2.12-1.96 3.07A32 32 0 0 1 8 14.58a32 32 0 0 1-2.206-2.57c-.726-.95-1.436-2.008-1.96-3.07C3.304 7.867 3 6.862 3 6a5 5 0 0 1 10 0c0 .862-.305 1.867-.834 2.94M8 16s6-5.686 6-10A6 6 0 0 0 2 6c0 4.314 6 10 6 10"/><path d="M8 8a2 2 0 1 1 0-4 2 2 0 0 1 0 4m0 1a3 3 0 1 0 0-6 3 3 0 0 0 0 6"/></svg> Karachi</div></td>
<td class="c4"><div class="bl"><span class="badge bg-success">Delivered</span></div><div class="bl2"><span class="badge bg-warning">Express</span></div></td>
<td class="c5"><div class="bl"><span class="badge bg-success">Paid</span></div><div class="bal">Balance: $3,765.00</div></td>
<td class="c6"><div class="l24"><strong>$3,765.00</strong></div><div class="l24 s2"><small class="mut">500.00 kg</small></div></td>
<td class="c7"><div class="l24">Jul 28, 2025</div><div class="l24 s2"><small class="mut">4:50 PM</small></div></td>
<td class="c8"><div class="bg"><a class="ab ab1"><svg class="bi" viewBox="0 0 16 16" fill="currentColor"><path d="M16 8s-3-5.5-8-5.5S0 8 0 8s3 5.500 8 5.500S16 8 16 8M1.173 8a13 13 0 0 1 1.660-2.043C4.120 4.668 5.880 3.500 8 3.500s3.879 1.168 5.168 2.457A13 13 0 0 1 14.828 8q-.086.130-.195.288c-.335.480-.830 1.120-1.465 1.755C11.879 11.332 10.119 12.500 8 12.500s-3.879-1.168-5.168-2.457A13 13 0 0 1 1.172 8z"/><path d="M8 5.500a2.500 2.500 0 1 0 0 5 2.500 2.500 0 0 0 0-5M4.500 8a3.500 3.500 0 1 1 7 0 3.500 3.500 0 0 1-7 0"/></svg></a><a class="ab ab2"><svg class="bi" viewBox="0 0 16 16" fill="currentColor"><path d="M12.146.146a.5.5 0 0 1 .708 0l3 3a.5.5 0 0 1 0 .708l-10 10a.5.5 0 0 1-.168.110l-5 2a.5.5 0 0 1-.650-.650l2-5a.5.5 0 0 1 .110-.168zM11.207 2.500 13.500 4.793 14.793 3.500 12.500 1.207zm1.586 3L10.500 3.207 4 9.707V10h.500a.5.5 0 0 1 .5.5v.500h.500a.5.5 0 0 1 .5.5v.500h.293zm-9.761 5.175-.106.106-1.528 3.821 3.821-1.528.106-.106A.5.5 0 0 1 5 12.500V12h-.500a.5.5 0 0 1-.5-.5V11h-.500a.5.5 0 0 1-.468-.325"/></svg></a><a class="ab3"><svg class="bi" viewBox="0 0 16 16" fill="currentColor"><path d="M3 9.500a1.500 1.500 0 1 1 0-3 1.500 1.500 0 0 1 0 3m5 0a1.500 1.500 0 1 1 0-3 1.500 1.500 0 0 1 0 3m5 0a1.500 1.500 0 1 1 0-3 1.500 1.500 0 0 1 0 3"/></svg><span class="caret"></span></a></div></td>
</tr>
      </tbody>
    </table>
  </div>
</main>
</body></html>
